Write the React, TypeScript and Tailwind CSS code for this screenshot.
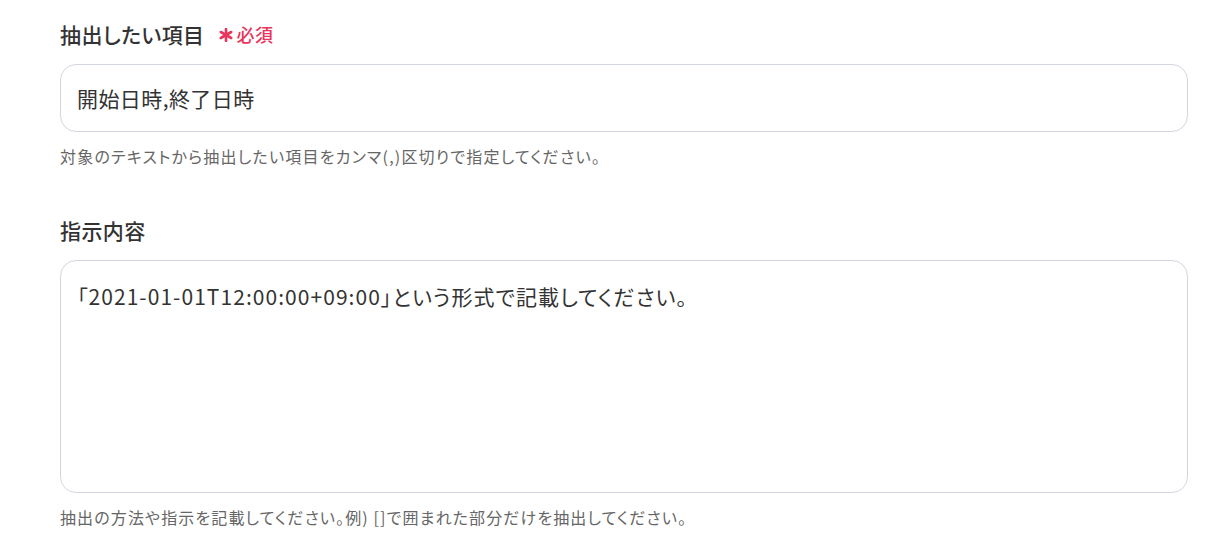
import React, { useState } from 'react';

const FONT = "font-['Noto_Sans_CJK_JP',sans-serif] [font-feature-settings:'palt']";

function RequiredMark() {
  return (
    <span className="ml-[14px] flex items-center gap-[4px] text-[18px] font-medium tracking-[0.02em] text-[#e8365d]">
      <svg width="14" height="14" viewBox="0 0 14 14" className="mt-[1px]">
        <g stroke="#e8365d" strokeWidth="2.6" strokeLinecap="round">
          <line x1="7" y1="1" x2="7" y2="13" />
          <line x1="1.8" y1="4" x2="12.2" y2="10" />
          <line x1="1.8" y1="10" x2="12.2" y2="4" />
        </g>
      </svg>
      必須
    </span>
  );
}

export default function App() {
  const [items, setItems] = useState('開始日時,終了日時');
  const [instruction, setInstruction] = useState(
    '「2021-01-01T12:00:00+09:00」という形式で記載してください。'
  );

  return (
    <div className={`${FONT} min-h-[560px] bg-white pl-[60px] pr-[44px] pt-[20px] text-[#333333]`}>
      {/* 抽出したい項目 */}
      <div>
        <label htmlFor="items" className="flex items-center text-[21px] leading-[28px] font-medium tracking-[0.02em]">
          抽出したい項目
          <RequiredMark />
        </label>
        <input
          id="items"
          type="text"
          value={items}
          onChange={(e) => setItems(e.target.value)}
          className="mt-[16px] block h-[68px] w-full rounded-[16px] border border-[#d3d8e0] bg-white px-4 text-[21px] tracking-[0.02em] text-[#333333] outline-none"
        />
        <p className="mt-[12px] text-[16px] leading-[24px] tracking-[0.075em] text-[#666666]">
          対象のテキストから抽出したい項目をカンマ(,)区切りで指定してください。
        </p>
      </div>

      {/* 指示内容 */}
      <div className="mt-[48px]">
        <label htmlFor="instruction" className="block text-[21px] leading-[28px] font-medium tracking-[0.02em]">
          指示内容
        </label>
        <textarea
          id="instruction"
          value={instruction}
          onChange={(e) => setInstruction(e.target.value)}
          className="mt-[16px] block h-[233px] w-full resize-none rounded-[16px] border border-[#d3d8e0] bg-white px-4 pt-[20px] text-[21px] leading-[30px] tracking-[0.05em] text-[#333333] outline-none"
        />
        <p className="mt-[12px] text-[16px] leading-[24px] tracking-[0.07em] text-[#666666]">
          抽出の方法や指示を記載してください。例) []で囲まれた部分だけを抽出してください。
        </p>
      </div>
    </div>
  );
}
